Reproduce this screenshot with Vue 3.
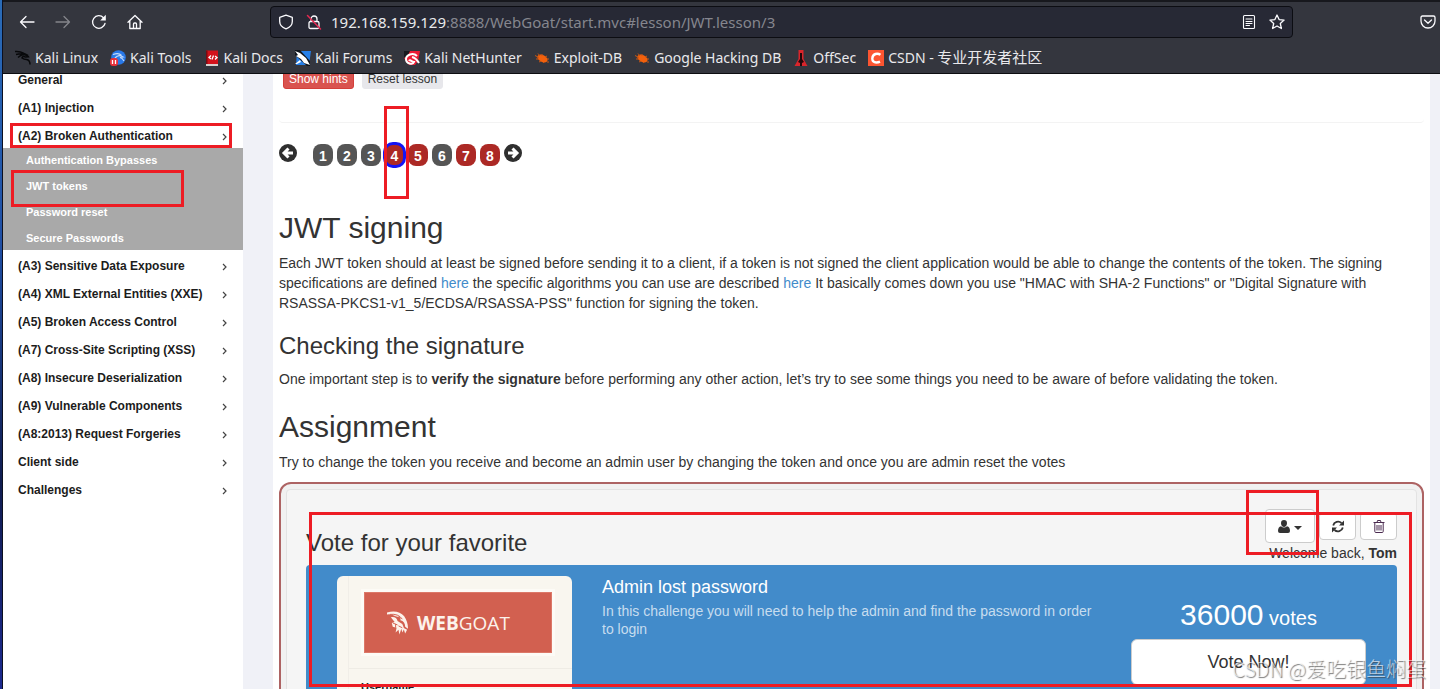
<script setup>
const bookmarks = [
  { icon: 'dragon', label: 'Kali Linux' },
  { icon: 'tools', label: 'Kali Tools' },
  { icon: 'docs', label: 'Kali Docs' },
  { icon: 'forums', label: 'Kali Forums' },
  { icon: 'hunter', label: 'Kali NetHunter' },
  { icon: 'bug', label: 'Exploit-DB' },
  { icon: 'bug', label: 'Google Hacking DB' },
  { icon: 'offsec', label: 'OffSec' },
  { icon: 'csdn', label: 'CSDN - ', zh: '专业开发者社区' },
]
const menu = [
  { label: 'General' },
  { label: '(A1) Injection' },
  {
    label: '(A2) Broken Authentication',
    children: ['Authentication Bypasses', 'JWT tokens', 'Password reset', 'Secure Passwords'],
  },
  { label: '(A3) Sensitive Data Exposure' },
  { label: '(A4) XML External Entities (XXE)' },
  { label: '(A5) Broken Access Control' },
  { label: '(A7) Cross-Site Scripting (XSS)' },
  { label: '(A8) Insecure Deserialization' },
  { label: '(A9) Vulnerable Components' },
  { label: '(A8:2013) Request Forgeries' },
  { label: 'Client side' },
  { label: 'Challenges' },
]
const pages = [
  { n: 1 }, { n: 2 }, { n: 3 },
  { n: 4, attack: true, current: true },
  { n: 5, attack: true }, { n: 6 },
  { n: 7, attack: true }, { n: 8, attack: true },
]
</script>

<template>
  <div class="desktop">
    <div class="window">
      <header class="chrome">
        <div class="toolbar">
          <nav class="nav-buttons">
            <button aria-label="Back"><svg viewBox="0 0 16 16"><path d="M15 8H1.500M7 2.500 1.500 8 7 13.500" /></svg></button>
            <button aria-label="Forward" class="dim"><svg viewBox="0 0 16 16"><path d="M1 8h13.500M9 2.500 14.500 8 9 13.500" /></svg></button>
            <button aria-label="Reload"><svg viewBox="0 0 16 16"><path d="M14 9.500A6.300 6.300 0 1 1 12.500 3.700" /><path class="solid" d="M14.800.8v5.700H9.200z" /></svg></button>
            <button aria-label="Home"><svg viewBox="0 0 16 16"><path d="M1 8.200 8 1.500l7 6.700M2.800 6.800v7.700h10.400V6.800M6.500 14.500V10q0-1 1-1h1q1 0 1 1v4.500" /></svg></button>
          </nav>
          <div class="urlbar">
            <svg viewBox="0 0 16 16"><path d="M8 1.200 14.300 3.400v4.200c0 3.500-2.600 6-6.300 7.300-3.700-1.300-6.300-3.800-6.300-7.300V3.400z" /></svg>
            <svg class="lock" viewBox="0 0 16 16"><path d="M5 7.500V5a3 3 0 0 1 6 0v2.500M4.500 7.500h7q1.500 0 1.500 1.500v4q0 1.500-1.500 1.500h-7Q3 14.500 3 13V9q0-1.500 1.500-1.500z" /><path class="slash" d="M1.500 1.500l13 13.500" /></svg>
            <p class="url">192.168.159.129<span>:8888/WebGoat/start.mvc#lesson/JWT.lesson/3</span></p>
            <button aria-label="Reader view"><svg class="reader" viewBox="0 0 16 16"><path d="M3.500 1.500h9q1 0 1 1v11q0 1-1 1h-9q-1 0-1-1v-11q0-1 1-1zM5 5h6M5 7.500h6M5 9.500h6M5 11.500h3.500" /></svg></button>
            <button aria-label="Bookmark page"><svg viewBox="0 0 16 16"><path d="m8 1 2.100 4.600 5 .5-3.800 3.400 1.100 5L8 12l-4.400 2.500 1.100-5L.9 6.100l5-.5z" /></svg></button>
          </div>
          <button class="pocket" aria-label="Save to Pocket"><svg viewBox="0 0 16 16"><path d="M2.500 2h11Q15 2 15 3.500V7A7 7 0 0 1 1 7V3.500Q1 2 2.500 2zM4.500 6 8 9.300 11.500 6" /></svg></button>
        </div>
        <nav class="bookmarks">
          <a v-for="b in bookmarks" :key="b.label" href="#">
            <svg v-if="b.icon === 'dragon'" viewBox="0 0 16 16"><path fill="none" stroke="#08090b" stroke-width="1.500" d="M0 1.500q5-.5 9 2M1 4.500q4-1 8-.5M3 7.500q3-3 6-3 4 1 4.500 2.200l-3 .2Q7 6 7 8q2 1.500 4.500 1.500 3.500.5 3.500 5M9 3.500l4 2" /></svg>
            <svg v-else-if="b.icon === 'tools'" viewBox="0 0 16 16"><circle cx="8.500" cy="7.500" r="7.300" fill="#2878e8" /><path fill="none" stroke="#c4dcfc" stroke-width="1.200" d="M3 4.500q6-2 8.500 1M5 8q3-3.500 6-2l2 1-3 .5q2.500.5 4 3.500" /><rect y="8" width="8" height="8" rx="3" fill="#e8303a" /><path stroke="#fff" stroke-width="1.300" d="M2.500 10v4M5.500 10v4" /></svg>
            <svg v-else-if="b.icon === 'docs'" viewBox="0 0 16 16"><path fill="#d8d0ce" d="M2 12h12v4H2z" /><path fill="#d3121b" d="M2 .5h12V14H2z" /><path fill="#780b12" d="M2 .5h1.500V14H2z" /><path fill="none" stroke="#fff" stroke-width="1.300" d="M7 5.500 5 7.500l2 1.500M9.500 5.500 8 9.500M11 6l2 1.500-2 2" /></svg>
            <svg v-else-if="b.icon === 'forums'" viewBox="0 0 16 16"><path fill="#267fe8" d="M2 1h14l-2 14H1z" /><path fill="#10151d" d="M0 0h5l10 11v5h-3L0 5z" /><path fill="#fff" d="m0 1 5 2 6 5 4 7-6-2-3-4-5-3 2-1zM0 14l5-4 1 2-4 2z" /></svg>
            <svg v-else-if="b.icon === 'hunter'" viewBox="0 0 16 16"><path fill="#ec1c35" d="M4 1h12l-2 10-3 4H5L0 8z" /><path fill="#17191f" d="M0 1h6L2 9 0 7z" /><path fill="none" stroke="#fff" stroke-width="2" d="M13 6C9 2 2 5 2 9c0 5 7 6 8 3-2 0-4-3-5-1M8 7q4 1 7 6" /></svg>
            <svg v-else-if="b.icon === 'bug'" viewBox="0 0 16 16"><ellipse cx="8.500" cy="8.500" rx="5.500" ry="3.500" fill="#f2600c" transform="rotate(28 8.500 8.500)" /><path fill="none" stroke="#c85512" d="M4 3.500l2 2.500M8 4v2M1 5.500l4 2M2 9h3M5 12l2-1M9 13l1-1M11 7l2-1M13 9h2M13 12h2" /></svg>
            <svg v-else-if="b.icon === 'offsec'" viewBox="0 0 16 16"><path fill="#d9252b" d="M5.500 0h5v9l4 7h-13l4-7z" /><path fill="#24070a" d="M7 3h2v6l2 3-2 1v3H7v-3l-2-1 2-3z" /></svg>
            <svg v-else viewBox="0 0 16 16"><path fill="#fc5531" d="M0 0h16v16H0z" /><path fill="none" stroke="#fff" stroke-width="2.400" d="M12.500 4.800Q10 3.200 7.500 4 4.500 5 4.300 8.500q0 4 4 4 2 0 3.700-.8" /></svg>
            <span>{{ b.label }}<span v-if="b.zh" class="zh" lang="zh">{{ b.zh }}</span></span>
          </a>
        </nav>
      </header>

      <div class="page">
        <aside class="sidebar">
          <ul>
            <li v-for="item in menu" :key="item.label">
              <a class="entry" href="#">{{ item.label }}<svg viewBox="0 0 6 8"><path d="m1 1 3 3-3 3" /></svg></a>
              <ul v-if="item.children" class="submenu">
                <li v-for="c in item.children" :key="c"><a href="#">{{ c }}</a></li>
              </ul>
            </li>
          </ul>
        </aside>

        <main class="content">
          <div class="lesson-tools">
            <button class="hints">Show hints</button>
            <button class="reset">Reset lesson</button>
          </div>

          <nav class="pager">
            <a href="#" class="arrow" aria-label="Previous"><svg viewBox="0 0 18 18"><circle cx="9" cy="9" r="9" /><path d="M14 9H6M9.500 4.500 5 9l4.500 4.500" /></svg></a>
            <span class="numbers">
              <a v-for="p in pages" :key="p.n" href="#" :class="{ attack: p.attack, current: p.current }">{{ p.n }}</a>
            </span>
            <a href="#" class="arrow" aria-label="Next"><svg viewBox="0 0 18 18"><circle cx="9" cy="9" r="9" /><path d="M4 9h8M8.500 4.500 13 9l-4.500 4.500" /></svg></a>
          </nav>

          <article>
            <h1>JWT signing</h1>
            <p>Each JWT token should at least be signed before sending it to a client, if a token is not signed the client application would be able to change the contents of the token. The signing specifications are defined <a href="#">here</a> the specific algorithms you can use are described <a href="#">here</a> It basically comes down you use "HMAC with SHA-2 Functions" or "Digital Signature with RSASSA-PKCS1-v1_5/ECDSA/RSASSA-PSS" function for signing the token.</p>
            <h2>Checking the signature</h2>
            <p>One important step is to <b>verify the signature</b> before performing any other action, let’s try to see some things you need to be aware of before validating the token.</p>
            <h1>Assignment</h1>
            <p>Try to change the token you receive and become an admin user by changing the token and once you are admin reset the votes</p>
          </article>

          <section class="assignment">
            <div class="well">
              <div class="vote-head">
                <h2>Vote for your favorite</h2>
                <div class="account">
                  <div class="actions">
                    <button class="user" aria-label="Change user">
                      <svg class="person" viewBox="0 0 12 13"><path d="M6 0a3 3.300 0 0 1 3 3.300C9 5.500 7.500 7 6 7S3 5.500 3 3.300A3 3.300 0 0 1 6 0zM3 6.200Q6 9 9 6.200q3 .5 3 4.800 0 2-2 2H2q-2 0-2-2 0-4.300 3-4.800z" /></svg>
                      <svg class="caret" viewBox="0 0 8 4"><path d="M0 0h8L4 4z" /></svg>
                    </button>
                    <button aria-label="Refresh"><svg class="refresh" viewBox="0 0 12 12"><path d="M1.200 5A5 5 0 0 1 9.500 2.500M10.800 7A5 5 0 0 1 2.500 9.500" /><path class="solid" d="M12 0v5H7zM0 12V7h5z" /></svg></button>
                    <button aria-label="Reset votes"><svg class="trash" viewBox="0 0 12 13"><path d="M.5 2.500h11M4 2.500l.5-2h3l.5 2M1.800 2.500v9q0 1 1 1h6.400q1 0 1-1v-9M4 5v5.500M6 5v5.500M8 5v5.500" /></svg></button>
                  </div>
                  <p>Welcome back, <b>Tom</b></p>
                </div>
              </div>

              <div class="challenge">
                <div class="shot">
                  <div class="shot-inner">
                    <div class="banner">
                      <svg viewBox="0 0 23 24"><path d="M0 1Q12-2 18 5q4 6 4 13l-3-2q0-6-5-7 2-5-9-6 5 0 8 3L9 5Q4 2 0 3z" /><path d="M4 6q6-1 7 4l5 3 2 5-2 4-1-4-2 6-1-5-3 3 1-5-4-1-1-4 3-1zM17 17l4 2-2 4z" /><path class="cut" d="M3 3q9-1 13 5M6 12l5 2M12 15l4 2M9 13v4" /></svg>
                      <span><b>WEB</b>GOAT</span>
                    </div>
                    <p>Username</p>
                  </div>
                </div>
                <div class="about">
                  <h4>Admin lost password</h4>
                  <p>In this challenge you will need to help the admin and find the password in order to login</p>
                </div>
                <div class="votes">
                  <p>36000<small> votes</small></p>
                  <button>Vote Now!</button>
                </div>
              </div>
            </div>
          </section>
        </main>
      </div>
    </div>

    <i class="mark mark-menu"></i>
    <i class="mark mark-tokens"></i>
    <i class="mark mark-page"></i>
    <i class="mark mark-votes"></i>
    <i class="mark mark-user"></i>
    <p class="watermark">CSDN @爱吃银鱼焖蛋</p>
  </div>
</template>

<style>
body {
  margin: 0;
}
</style>

<style scoped>
* {
  box-sizing: border-box;
}
p, h1, h2, h4, ul {
  margin: 0;
  padding: 0;
  font-weight: normal;
}
ul {
  list-style: none;
}
a {
  text-decoration: none;
}
button {
  border: 0;
  padding: 0;
  background: none;
  color: inherit;
  font: inherit;
}
svg {
  display: block;
  overflow: visible;
}
.desktop {
  position: relative;
  height: 100vh;
  overflow: hidden;
  padding-left: 3px;
  background: linear-gradient(90deg, transparent 2px, #0c1020 2px), linear-gradient(#2a6cb8, #1f4fa5 35%, #101c50 70%, #1c2a90);
  font-family: "Liberation Sans", Arial, sans-serif;
  font-size: 14px;
  line-height: 20px;
  color: #333;
}
.window {
  display: flex;
  flex-direction: column;
  height: 100%;
}

.chrome {
  flex: none;
  padding-top: 4px;
  border-top: 2px solid #17181d;
  border-bottom: 1px solid #0c0d11;
  background: #34363e;
  color: #e9e9ec;
  font-family: "Noto Sans", "Noto Sans CJK SC", sans-serif;
}
.toolbar {
  display: flex;
  align-items: center;
  height: 32px;
}
.toolbar svg {
  width: 16px;
  height: 16px;
  fill: none;
  stroke: #fbfbfe;
  stroke-width: 1.300;
  stroke-linejoin: round;
  stroke-linecap: round;
}
.toolbar .reader {
  stroke-width: 1.100;
}
.toolbar .solid {
  fill: #fbfbfe;
  stroke: none;
}
.nav-buttons {
  display: flex;
  gap: 20px;
  padding-left: 16px;
  width: 267px;
}
.dim {
  opacity: 0.4;
}
.urlbar {
  flex: 1;
  display: flex;
  align-items: center;
  gap: 12px;
  height: 32px;
  padding: 0 7px;
  border: 1px solid #0c0d12;
  border-radius: 4px;
  background: #272935;
}
.urlbar .slash {
  stroke: #e22850;
  stroke-width: 1.500;
}
.url {
  flex: 1;
  margin-left: -3px;
  font-size: 15px;
}
.url span {
  color: #85868e;
}
.pocket {
  margin: 0 4px 0 127px;
}
.bookmarks {
  display: flex;
  align-items: center;
  gap: 12px;
  height: 35px;
  padding: 4px 0 0 12px;
}
.bookmarks a {
  display: flex;
  align-items: center;
  gap: 4px;
  color: #e9e9ec;
  font-size: 14px;
  white-space: pre;
}
.bookmarks svg {
  width: 16px;
  height: 16px;
}
.zh {
  font-size: 15px;
}

.page {
  flex: 1;
  min-height: 0;
  display: flex;
  overflow: hidden;
  background: #f0f1f7;
}
.sidebar {
  flex: none;
  width: 240px;
  margin-right: 30px;
  background: #fff;
}
.sidebar > ul {
  margin-top: -8px;
}
.entry {
  display: flex;
  align-items: center;
  justify-content: space-between;
  padding: 0 15px;
  color: #1c1c1c;
  font-size: 12px;
  font-weight: bold;
  line-height: 28px;
}
.entry svg {
  width: 6px;
  height: 8px;
  margin-top: 1px;
  fill: none;
  stroke: #444;
  stroke-width: 1.200;
}
.submenu {
  display: grid;
  gap: 2px;
  margin: -2px 0 2px;
  background: #a9a9a9;
}
.submenu a {
  display: block;
  padding-left: 23px;
  color: #fff;
  font-size: 11px;
  font-weight: bold;
  line-height: 24px;
}

.content {
  flex: 1;
  min-width: 0;
  margin-right: 10px;
  padding: 0 6px;
  background: #fff;
}
.lesson-tools {
  display: flex;
  align-items: flex-start;
  gap: 8px;
  height: 49px;
  padding-left: 4px;
  border-bottom: 1px solid #f3f3f3;
  border-radius: 0 0 4px 4px;
}
.lesson-tools button {
  height: 22px;
  margin-top: -7px;
  padding: 2px 5px 0;
  border: 1px solid #e7e7eb;
  border-radius: 3px;
  background: #e7e7eb;
  font-size: 12px;
  line-height: 18px;
}
.lesson-tools .hints {
  border-color: #d43f3a;
  background: #d9534f;
  color: #fff;
}

.pager {
  display: flex;
  margin-top: 21px;
}
.arrow svg {
  width: 18px;
  height: 18px;
  fill: #2f2f2f;
}
.arrow path {
  fill: none;
  stroke: #fff;
  stroke-width: 3;
}
.numbers {
  display: flex;
  gap: 4px;
  margin: 0 4px 0 16px;
}
.numbers a {
  width: 20px;
  height: 22px;
  border-radius: 8px;
  background: #555;
  color: #fff;
  font-weight: bold;
  line-height: 24px;
  text-align: center;
}
.numbers .attack {
  background: #ac2925;
}
.numbers .current {
  width: 19px;
  outline: 3px solid #1414f5;
  outline-offset: -1px;
}

h1 {
  font-size: 30px;
  line-height: 33px;
}
h2 {
  font-size: 24px;
  line-height: 26px;
}
article h1 {
  margin: 21px 0 9px;
}
article h1:first-child {
  margin-top: 45px;
}
article h2 {
  margin: 20px 0 10px;
}
article a {
  color: #428bca;
}

.assignment {
  margin-top: 10px;
  padding: 5px;
  border: 2px solid #ad6363;
  border-radius: 12px;
  background: #f1f1f1;
}
.well {
  padding: 19px;
  border: 1px solid #e3e3e3;
  border-radius: 4px;
  background: #f5f5f5;
}
.vote-head {
  display: flex;
  justify-content: space-between;
}
.vote-head h2 {
  margin-top: 21px;
}
.account {
  text-align: right;
}
.actions {
  display: flex;
  align-items: center;
  justify-content: flex-end;
  gap: 4px;
}
.actions button {
  display: flex;
  align-items: center;
  justify-content: center;
  gap: 4px;
  width: 37px;
  height: 28px;
  border: 1px solid #ccc;
  border-radius: 4px;
  background: #fff;
}
.actions .user {
  width: 50px;
  height: 34px;
}
.person, .refresh, .trash {
  width: 12px;
  height: 13px;
}
.person, .caret {
  fill: #333;
}
.caret {
  width: 8px;
  height: 4px;
  margin-top: 3px;
}
.refresh {
  fill: none;
  stroke: #333;
  stroke-width: 1.800;
}
.refresh .solid {
  fill: #333;
  stroke: none;
}
.trash {
  fill: none;
  stroke: #4b2b50;
}
.account p {
  margin-top: -1px;
  line-height: 23px;
}

.challenge {
  display: grid;
  grid-template-columns: 235px 1fr 235px;
  gap: 30px;
  padding: 11px 31px 40px;
  border-radius: 4px;
  background: #428bca;
  color: #fff;
}
.shot {
  padding-left: 11px;
  border-radius: 6px;
  background: #f9f6ef;
}
.shot-inner {
  padding-top: 16px;
  border-left: 1px solid #f1eee8;
}
.banner {
  display: flex;
  align-items: center;
  gap: 8px;
  width: 188px;
  height: 61px;
  margin: 0 0 15px 15px;
  padding-left: 22px;
  border: 1px solid #dc7868;
  outline: 3px solid #fdfbf6;
  background: #d26050;
  color: #fcf3ec;
  font-family: "Open Sans", sans-serif;
  font-size: 19px;
}
.banner svg {
  width: 22px;
  height: 24px;
  fill: #fcf3ec;
}
.banner .cut {
  fill: none;
  stroke: #d26050;
}
.shot-inner p {
  padding: 10px 12px;
  border-top: 1px solid #efece5;
  color: #222;
  font-size: 11px;
  font-weight: bold;
  line-height: 16px;
}
.about h4 {
  font-size: 18px;
  line-height: 22px;
}
.about p {
  margin-top: 4px;
  color: #c7ddef;
  line-height: 18px;
}
.votes {
  text-align: center;
}
.votes p {
  margin-top: 22px;
  font-size: 30px;
  line-height: 33px;
}
.votes small {
  font-size: 20px;
}
.votes button {
  display: block;
  width: 100%;
  height: 46px;
  margin-top: 4px;
  border: 1px solid #ccc;
  border-radius: 6px;
  background: #fff;
  color: #333;
  font-size: 18px;
}

.mark {
  position: absolute;
  border: 3px solid #ed1c24;
}
.mark-menu {
  left: 10px;
  top: 123px;
  width: 222px;
  height: 25px;
}
.mark-tokens {
  left: 11px;
  top: 170px;
  width: 173px;
  height: 37px;
}
.mark-page {
  left: 384px;
  top: 106px;
  width: 25px;
  height: 93px;
}
.mark-votes {
  left: 309px;
  right: 28px;
  top: 512px;
  height: 175px;
}
.mark-user {
  right: 121px;
  top: 490px;
  width: 73px;
  height: 65px;
}
.watermark {
  position: absolute;
  right: 14px;
  top: 655px;
  color: rgba(255, 255, 255, 0.65);
  font-family: "Noto Sans CJK SC", sans-serif;
  font-size: 20px;
  font-weight: 300;
  line-height: 28px;
  text-shadow: 1px 1px 1px rgba(60, 60, 60, 0.7);
  white-space: nowrap;
}
</style>
